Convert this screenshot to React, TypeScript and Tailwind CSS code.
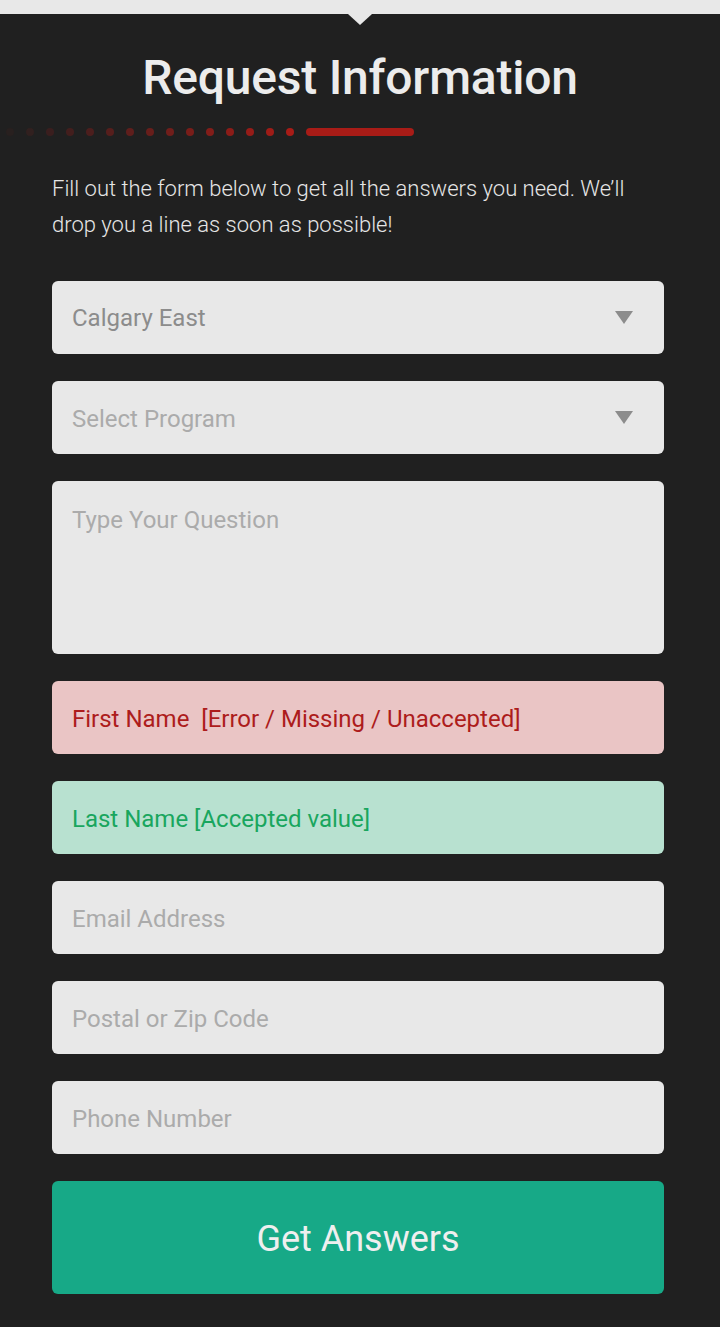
import React from "react";

const font = { fontFamily: "Roboto, 'Noto Sans', Arial, sans-serif" };

function Caret() {
  return (
    <svg width="18" height="13" viewBox="0 0 18 13" className="shrink-0">
      <polygon points="0,0 18,0 9,13" fill="#8c8c8c" />
    </svg>
  );
}

export default function App() {
  const dots = Array.from({ length: 15 }, (_, i) => i);
  return (
    <div
      className="w-[720px] min-h-[1327px] bg-[#202020] flex flex-col"
      style={font}
    >
      <div className="relative h-[14px] bg-[#e8e8e8] shrink-0">
        <div className="absolute left-[348px] top-[14px] w-0 h-0 border-l-[12px] border-r-[12px] border-t-[11px] border-l-transparent border-r-transparent border-t-[#e8e8e8]" />
      </div>

      <h1 className="mt-[36px] text-center text-[48px] leading-[56px] font-medium text-[#ececec] tracking-[-0.2px]">
        Request Information
      </h1>

      <div className="mt-[22px] flex items-center h-[8px] pl-[6px] gap-[12px]">
        {dots.map((i) => (
          <div
            key={i}
            className="w-[8px] h-[8px] rounded-full bg-[#a81c17] shrink-0"
            style={{ opacity: 0.06 + (i / 14) * 0.94 }}
          />
        ))}
        <div className="w-[108px] h-[8px] rounded-full bg-[#a81c17] shrink-0" />
      </div>

      <p className="mt-[35px] px-[52px] text-[22px] leading-[36px] font-light text-[#e6e6e6]">
        Fill out the form below to get all the answers you need. We’ll drop you a line as soon as possible!
      </p>

      <div className="mt-[38px] ml-[52px] w-[612px] flex flex-col gap-[27px]">
        <div className="h-[73px] rounded-[6px] bg-[#e8e8e8] flex items-center justify-between pl-[20px] pr-[31px]">
          <span className="text-[24px] text-[#8c8c8c]">Calgary East</span>
          <Caret />
        </div>
        <div className="h-[73px] rounded-[6px] bg-[#e8e8e8] flex items-center justify-between pl-[20px] pr-[31px]">
          <span className="text-[24px] text-[#ababab] pt-[3px]">Select Program</span>
          <Caret />
        </div>
        <div className="h-[173px] rounded-[6px] bg-[#e8e8e8] px-[20px] pt-[24px]">
          <span className="text-[24px] leading-[30px] text-[#ababab]">Type Your Question</span>
        </div>
        <div className="h-[73px] rounded-[6px] bg-[#eac5c5] flex items-center px-[20px] pt-[3px]">
          <span className="text-[24px] text-[#ad1c1c] whitespace-pre">First Name  [Error / Missing / Unaccepted]</span>
        </div>
        <div className="h-[73px] rounded-[6px] bg-[#b8e1d0] flex items-center px-[20px] pt-[3px]">
          <span className="text-[24px] text-[#19a65e]">Last Name [Accepted value]</span>
        </div>
        <div className="h-[73px] rounded-[6px] bg-[#e8e8e8] flex items-center px-[20px] pt-[3px]">
          <span className="text-[24px] text-[#ababab]">Email Address</span>
        </div>
        <div className="h-[73px] rounded-[6px] bg-[#e8e8e8] flex items-center px-[20px] pt-[3px]">
          <span className="text-[24px] text-[#ababab]">Postal or Zip Code</span>
        </div>
        <div className="h-[73px] rounded-[6px] bg-[#e8e8e8] flex items-center px-[20px] pt-[3px]">
          <span className="text-[24px] text-[#ababab]">Phone Number</span>
        </div>
        <button className="h-[113px] rounded-[6px] bg-[#17a987] flex items-center justify-center pt-[3px] text-[36px] text-[#efefef]">
          Get Answers
        </button>
      </div>
    </div>
  );
}
